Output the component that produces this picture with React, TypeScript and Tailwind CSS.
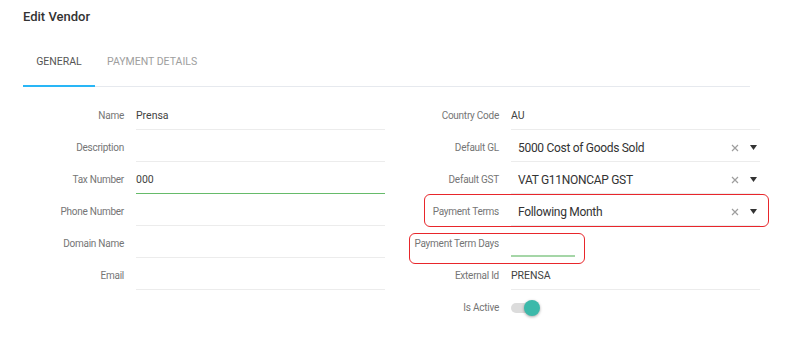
import React from 'react';

const LEFT_FIELDS = [
  { label: 'Name', value: 'Prensa' },
  { label: 'Description', value: '' },
  { label: 'Tax Number', value: '000', focused: true },
  { label: 'Phone Number', value: '' },
  { label: 'Domain Name', value: '' },
  { label: 'Email', value: '' },
];

const Label: React.FC<{ children: React.ReactNode }> = ({ children }) => (
  <div className="w-[101px] shrink-0 text-right text-[10px] tracking-[-0.25px] leading-[14px] text-[#757575] pt-[11px]">
    {children}
  </div>
);

const TextRow: React.FC<{ label: string; value: string; focused?: boolean }> = ({ label, value, focused }) => (
  <div className="flex h-[32px] gap-[12px]">
    <Label>{label}</Label>
    <div
      className={`w-[249px] h-[32px] pt-[11px] text-[10.5px] leading-[14px] text-[#424242] border-b ${
        focused ? 'border-[#66bb6a]' : 'border-[#ececec]'
      }`}
    >
      {value}
    </div>
  </div>
);

const SelectRow: React.FC<{ label: string; value: string }> = ({ label, value }) => (
  <div className="flex h-[32px] gap-[12px]">
    <Label>{label}</Label>
    <div className="w-[249px] h-[32px] flex items-start pt-[10px] pl-[7px] border-b border-[#ececec]">
      <span className="flex-1 text-[12px] tracking-[-0.3px] leading-[16px] text-[#333]">{value}</span>
      <svg width="8" height="8" viewBox="0 0 8 8" className="mt-[4px] mr-[11px]">
        <path d="M1 1L7 7M7 1L1 7" stroke="#9e9e9e" strokeWidth="1.2" />
      </svg>
      <svg width="7" height="5" viewBox="0 0 7 5" className="mt-[5px] mr-[3px]">
        <path d="M0 0H7L3.5 5Z" fill="#333" />
      </svg>
    </div>
  </div>
);

const App: React.FC = () => {
  return (
    <div className="w-[788px] h-[342px] bg-white font-['Roboto',sans-serif] pl-[23px] overflow-hidden">
      <h1 className="pt-[9px] text-[13px] leading-[16px] font-medium text-[#333]">Edit Vendor</h1>

      {/* Tabs */}
      <div className="mt-[26px] w-[727px] flex border-b border-[#e6e9ee] h-[36px]">
        <div className="w-[72px] text-center text-[10.5px] leading-[14px] pt-[4px] text-[#555] border-b-2 border-[#29b6f6] -mb-px">
          GENERAL
        </div>
        <div className="pl-[12px] text-[10.5px] leading-[14px] pt-[4px] text-[#9e9e9e]">PAYMENT DETAILS</div>
      </div>

      {/* Form */}
      <div className="mt-[11px] flex gap-[13px]">
        <div className="flex flex-col">
          {LEFT_FIELDS.map((f) => (
            <TextRow key={f.label} label={f.label} value={f.value} focused={f.focused} />
          ))}
        </div>

        <div className="flex flex-col">
          <TextRow label="Country Code" value="AU" />
          <SelectRow label="Default GL" value="5000 Cost of Goods Sold" />
          <SelectRow label="Default GST" value="VAT G11NONCAP GST" />
          <div className="relative">
            <SelectRow label="Payment Terms" value="Following Month" />
            <div className="absolute left-[26px] -right-[9px] top-0 -bottom-[1px] border-[1.5px] border-[#e8262b] rounded-[6px] pointer-events-none" />
          </div>
          <div className="relative flex h-[32px] gap-[12px]">
            <Label>Payment Term Days</Label>
            <div className="w-[64px] h-[32px] border-b-2 border-[#a5d6a7] -mt-[1px]" />
            <div className="absolute left-[11px] w-[176px] top-[7px] h-[31px] border-[1.5px] border-[#e8262b] rounded-[6px] pointer-events-none" />
          </div>
          <TextRow label="External Id" value="PRENSA" />
          <div className="flex h-[32px] gap-[12px]">
            <Label>Is Active</Label>
            <div className="relative w-[30px] h-[32px] pt-[10px]">
              <div className="mt-[3px] w-[24px] h-[10px] rounded-full bg-[#dcdcdc]" />
              <div className="absolute left-[13px] top-[10px] w-[16px] h-[16px] rounded-full bg-[#3cb9aa] shadow-[0_1px_3px_rgba(0,0,0,0.35)]" />
            </div>
          </div>
        </div>
      </div>
    </div>
  );
};

export default App;
